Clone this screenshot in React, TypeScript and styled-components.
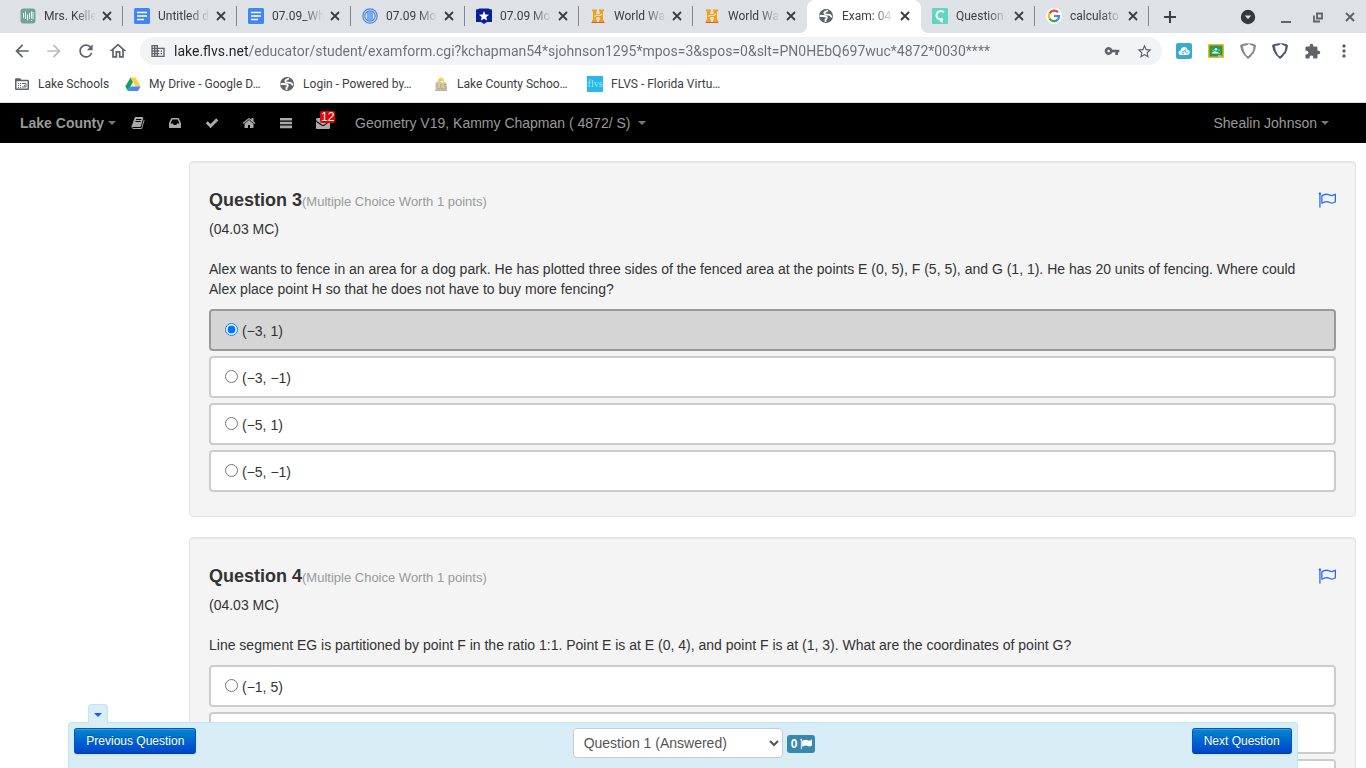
import React, { useState } from "react";
import styled, { createGlobalStyle, css } from "styled-components";
import {
  MdArrowBack,
  MdArrowForward,
  MdDomain,
  MdExtension,
  MdMoreVert,
  MdOutlineHome,
  MdRefresh,
  MdStarBorder,
  MdVpnKey,
} from "react-icons/md";

const GlobalStyle = createGlobalStyle`
  *, *::before, *::after { box-sizing: border-box; }
  html, body, #root { height: 100%; }
  body {
    margin: 0;
    background: #fff;
    color: #333;
    font: 14px/20px "Liberation Sans", Arial, sans-serif;
    overflow: hidden;
  }
  button { margin: 0; border: 0; padding: 0; background: none; font: inherit; color: inherit; cursor: pointer; }
  svg { display: block; flex: none; }
`;

/* ---------- Browser window ---------- */

const Window = styled.div`
  display: flex;
  flex-direction: column;
  height: 100%;
`;

const TabStrip = styled.div`
  display: flex;
  flex: none;
  height: 33px;
  padding-left: 9px;
  background: #dee1e6;
  font-family: Roboto, sans-serif;
  font-size: 12px;
  color: #3c4043;
`;

const TabList = styled.div`
  display: flex;
  flex: 0 1 1140px;
  min-width: 0;
`;

const Tab = styled.div<{ $active?: boolean; $line?: boolean }>`
  position: relative;
  display: flex;
  flex: 1 1 0;
  min-width: 0;
  align-items: center;
  gap: 8px;
  padding: 0 8px 1px 11px;

  ${(p) =>
    p.$line &&
    css`
      &::after {
        content: "";
        position: absolute;
        right: 0;
        top: 6px;
        width: 1px;
        height: 20px;
        background: #80868b;
      }
    `}

  ${(p) =>
    p.$active &&
    css`
      background: #fff;
      border-radius: 8px 8px 0 0;
      &::before,
      &::after {
        content: "";
        position: absolute;
        bottom: 0;
        width: 8px;
        height: 8px;
      }
      &::before {
        left: -8px;
        background: radial-gradient(circle at 0 0, transparent 8px, #fff 8px);
      }
      &::after {
        right: -8px;
        background: radial-gradient(circle at 100% 0, transparent 8px, #fff 8px);
      }
    `}
`;

const TabTitle = styled.span`
  flex: 1;
  min-width: 0;
  white-space: nowrap;
  line-height: 16px;
  mask-image: linear-gradient(90deg, #000 60%, transparent);
`;

const TabClose = styled.button`
  flex: none;
  margin-left: -5px;
`;

const NewTab = styled.button`
  display: grid;
  place-items: center;
  width: 42px;
`;

const WindowControls = styled.div`
  display: flex;
  align-items: center;
  margin-left: auto;
`;

const WindowButton = styled.button<{ $wide?: boolean }>`
  display: grid;
  place-items: center;
  width: ${(p) => (p.$wide ? 44 : 32)}px;
  height: 33px;
  color: #5f6368;
`;

const Toolbar = styled.div`
  display: flex;
  flex: none;
  align-items: center;
  height: 36px;
  padding: 0 6px;
  color: #5f6368;
`;

const ToolButton = styled.button<{ $dim?: boolean }>`
  display: grid;
  flex: none;
  place-items: center;
  width: 32px;
  height: 28px;
  color: ${(p) => (p.$dim ? "#babcbe" : "#5f6368")};
`;

const Omnibox = styled.form`
  display: flex;
  flex: 1;
  align-items: center;
  min-width: 0;
  height: 28px;
  margin: 0 6px;
  padding: 0 2px 0 10px;
  border-radius: 14px;
  background: #f1f3f4;
`;

const Address = styled.input`
  flex: 1;
  min-width: 0;
  height: 20px;
  margin-left: 8px;
  border: 0;
  padding: 0;
  outline: 0;
  font: 14px/20px Roboto, sans-serif;
  color: transparent;
  caret-color: #202124;
  background: linear-gradient(90deg, #202124 75px, #6b6f73 75px);
  background-clip: text;
`;

const Bookmarks = styled.nav`
  display: flex;
  flex: none;
  align-items: center;
  gap: 16px;
  height: 34px;
  padding: 0 14px 3px;
  border-bottom: 1px solid #dadce0;
`;

const Bookmark = styled.a<{ $clipped?: boolean }>`
  display: flex;
  align-items: center;
  gap: 8px;
  min-width: ${(p) => (p.$clipped ? 138 : 0)}px;
  font: 12px/16px Roboto, sans-serif;
  color: #3c4043;
  text-decoration: none;
  white-space: nowrap;
`;

/* ---------- Course navigation ---------- */

const Navbar = styled.header`
  display: flex;
  flex: none;
  align-items: center;
  height: 40px;
  padding: 0 37px 0 20px;
  background: #000;
  color: #999;
`;

const NavLink = styled.a<{ $bold?: boolean; $gap?: number }>`
  display: flex;
  align-items: center;
  gap: ${(p) => p.$gap ?? 4}px;
  font-size: 14px;
  font-weight: ${(p) => (p.$bold ? "bold" : "normal")};
  color: #999;
  text-decoration: none;
  white-space: nowrap;
`;

const NavIcons = styled.div`
  display: flex;
  margin: 0 14px 0 3px;
`;

const NavIcon = styled.a`
  position: relative;
  display: grid;
  place-items: center;
  width: 37px;
  height: 40px;
  color: #aaa;
`;

const Count = styled.span`
  position: absolute;
  left: 16px;
  top: 8px;
  padding: 0 1px;
  border-radius: 2px;
  background: #e60000;
  color: #fff;
  font-size: 12px;
  line-height: 12px;
`;

const Caret = styled.i<{ $color?: string }>`
  border: 4px solid transparent;
  border-bottom-width: 0;
  border-top-color: ${(p) => p.$color ?? "#777"};
`;

const Push = styled.div`
  margin-left: auto;
`;

/* ---------- Exam ---------- */

const Exam = styled.main`
  flex: 1;
  min-height: 0;
  overflow: hidden;
  padding: 18px 10px 0 189px;
`;

const Card = styled.section`
  margin-bottom: 20px;
  padding: 19px;
  border: 1px solid #e3e3e3;
  border-radius: 4px;
  background: #f4f4f4;
  box-shadow: inset 0 1px 1px rgba(0, 0, 0, 0.05);
`;

const CardHead = styled.div`
  display: flex;
  align-items: center;
  justify-content: space-between;
  height: 38px;
`;

const Title = styled.h2`
  margin: 2px 0 0;
  font-size: 18px;
  line-height: 20px;
`;

const Worth = styled.small`
  font-size: 13px;
  font-weight: normal;
  color: #999;
`;

const Standard = styled.p`
  margin: 0 0 20px;
`;

const Prompt = styled.p`
  margin: 0 0 10px;
  padding-right: 14px;
`;

const Options = styled.fieldset`
  margin: 0;
  border: 0;
  padding: 0;
`;

const Option = styled.label<{ $picked: boolean }>`
  display: flex;
  align-items: flex-start;
  gap: 4px;
  height: 42px;
  margin-bottom: 5px;
  padding: 10px 14px 8px;
  border: 2px solid ${(p) => (p.$picked ? "#999" : "#ccc")};
  border-radius: 4px;
  background: ${(p) => (p.$picked ? "#d5d5d5" : "#fff")};
`;

const Radio = styled.input`
  width: 13px;
  height: 13px;
  margin: 2px 0 0;
`;

const FlagButton = styled.button`
  color: #2a6df4;
`;

/* ---------- Question pager ---------- */

const Pager = styled.footer`
  position: fixed;
  right: 5%;
  bottom: 0;
  left: 5%;
  display: flex;
  align-items: flex-start;
  justify-content: space-between;
  height: 46px;
  padding: 5px;
  border: 1px solid #bce8f1;
  border-bottom: 0;
  border-radius: 4px 4px 0 0;
  background: #d9edf7;
`;

const Handle = styled.button`
  position: absolute;
  left: 19px;
  top: -19px;
  display: grid;
  place-items: center;
  width: 20px;
  height: 20px;
  border: 1px solid #bce8f1;
  border-bottom: 0;
  border-radius: 4px 4px 0 0;
  background: #d9edf7;
`;

const StepButton = styled.button`
  height: 26px;
  padding: 0 11px;
  border: 1px solid;
  border-color: #0055cc #0055cc #003fb0;
  border-radius: 3px;
  background: linear-gradient(#0088cc, #0044cc);
  box-shadow: inset 0 1px 0 rgba(255, 255, 255, 0.2), 0 1px 2px rgba(0, 0, 0, 0.05);
  color: #fff;
  font-size: 12px;
  line-height: 20px;
  text-shadow: 0 -1px 0 rgba(0, 0, 0, 0.25);
`;

const Picker = styled.div`
  display: flex;
  gap: 4px;
`;

const QuestionSelect = styled.select`
  width: 210px;
  height: 30px;
  padding: 4px 6px;
  border: 1px solid #ccc;
  border-radius: 4px;
  background: #fff;
  color: #555;
  font: 14px/20px "Liberation Sans", Arial, sans-serif;
`;

const FlagCount = styled.span`
  display: flex;
  align-items: center;
  gap: 3px;
  height: 18px;
  margin-top: 7px;
  padding: 0 3px 0 4px;
  border-radius: 3px;
  background: #3a87ad;
  color: #fff;
  font-size: 12px;
  font-weight: bold;
`;

/* ---------- Drawings ---------- */

const glyphs = {
  book: "M1703 478q40 57 18 129l-275 906q-19 64-76.5 107.5t-122.5 43.5h-923q-77 0-148.5-53.5t-99.5-131.5q-24-67-2-127 0-4 3-27t4-37q1-8-3-21.5t-3-19.5q2-11 8-21t16.5-23.5 16.5-23.5q23-38 45-91.5t30-91.5q3-10 .5-30t-.5-28q3-11 17-28t17-23q21-36 42-92t25-90q1-9-2.5-32t.5-28q4-13 22-30.5t22-22.5q19-26 42.5-84.5t27.5-96.5q1-8-3-25.5t-2-26.5q2-8 9-18t18-23 17-21q8-12 16.5-30.5t15-35 16-36 19.5-32 26.5-23.5 36-11.5 47.5 5.5l-1 3q38-9 51-9h761q74 0 114 56t18 130l-274 906q-36 119-71.5 153.5t-128.5 34.5h-869q-27 0-38 15-11 16-1 43 24 70 144 70h923q29 0 56-15.5t35-41.5l300-987q7-22 5-57 38 15 59 43zm-1064 2q-4 13 2 22.5t20 9.5h608q13 0 25.5-9.5t16.5-22.5l21-64q4-13-2-22.5t-20-9.5h-608q-13 0-25.5 9.5t-16.5 22.5zm-83 256q-4 13 2 22.5t20 9.5h608q13 0 25.5-9.5t16.5-22.5l21-64q4-13-2-22.5t-20-9.5h-608q-13 0-25.5 9.5t-16.5 22.5z",
  inbox: "M1151 960h316q-1-3-2.5-8t-2.5-8l-212-496h-708l-212 496q-1 2-2.5 8t-2.5 8h316l95 192h320zm513 30v482q0 26-19 45t-45 19h-1408q-26 0-45-19t-19-45v-482q0-62 25-123l238-552q10-25 36.5-42t52.5-17h832q26 0 52.5 17t36.5 42l238 552q25 61 25 123z",
  check: "M1671 566q0 40-28 68l-724 724-136 136q-28 28-68 28t-68-28l-136-136-362-362q-28-28-28-68t28-68l136-136q28-28 68-28t68 28l294 295 656-657q28-28 68-28t68 28l136 136q28 28 28 68z",
  home: "M1472 992v480q0 26-19 45t-45 19h-384v-384h-256v384h-384q-26 0-45-19t-19-45v-480q0-1 .5-3t.5-3l575-474 575 474q1 2 1 6zm223-69l-62 74q-8 9-21 11h-3q-13 0-21-7l-692-577-692 577q-12 8-24 7-13-2-21-11l-62-74q-8-10-7-23.5t11-21.5l719-599q32-26 76-26t76 26l244 204v-195q0-14 9-23t23-9h192q14 0 23 9t9 23v408l219 182q10 8 11 21.5t-7 23.5z",
  bars: "M128 256h1536v330h-1536zM128 740h1536v330h-1536zM128 1224h1536v330h-1536z",
  mail: "M1792 710v794q0 66-47 113t-113 47h-1472q-66 0-113-47t-47-113v-794q44 49 101 87 362 246 497 345 57 42 92.5 65.5t94.5 48 110 24.5h2q51 0 110-24.5t94.5-48 92.5-65.5q170-123 498-345 57-39 100-87zm0-294q0 79-49 151t-122 123q-376 261-468 325-10 7-42.5 31t-54 38.5-52 32.5-57.5 27-50 9h-2q-23 0-50-9t-57.5-27-52-32.5-54-38.5-42.5-31q-91-64-262-182.5t-205-142.5q-62-42-117-115.5t-55-136.5q0-78 41.5-130t118.5-52h1472q65 0 112.5 47t47.5 113z",
  flag: "M320 256q0 72-64 110v1266q0 13-9.5 22.5t-22.5 9.5h-64q-13 0-22.5-9.5t-9.5-22.5v-1266q-64-38-64-110 0-53 37.5-90.5t90.5-37.5 90.5 37.5 37.5 90.5zm1472 64v763q0 25-12.5 38.5t-39.5 27.5q-215 116-369 116-61 0-123.5-22t-108.5-48-115.5-48-142.5-22q-192 0-464 146-17 9-33 9-26 0-45-19t-19-45v-742q0-32 31-55 21-14 79-43 236-120 421-120 107 0 200 29t219 88q38 19 88 19 54 0 117.5-21t110-47 88-47 54.5-21q26 0 45 19t19 45z",
  flagOutline:
    "M1664 1048v-616q-169 91-306 91-82 0-145-32-100-49-184-76.5t-178-27.5q-173 0-403 127v599q245-113 433-113 55 0 103.5 7.5t98 26 77 31 82.5 39.5l28 14q44 22 101 22 120 0 293-92zM320 256q0 35-17.5 64t-46.5 46v1266q0 14-9 23t-23 9h-64q-14 0-23-9t-9-23V366q-29-17-46.5-46T64 256q0-53 37.5-90.5T192 128t90.5 37.5T320 256zM1792 320v763q0 39-35 57-10 5-17 9-218 116-369 116-88 0-158-35l-28-14q-64-33-99-48t-91-29-114-14q-102 0-235.5 44T417 1271q-15 9-33 9-16 0-32-8-32-19-32-56V474q0-35 31-55 35-21 78.5-42.5t114-52T696 275t155-19q112 0 209 31t209 86q38 19 89 19 122 0 310-112 22-12 31-17 31-16 62 2 31 20 31 55z",
};

type GlyphName = keyof typeof glyphs;

const Glyph = ({ name, size = 14 }: { name: GlyphName; size?: number }) => (
  <svg width={size} height={size} viewBox="0 0 1792 1792" fill="currentColor" fillRule="evenodd" aria-hidden="true">
    <path d={glyphs[name]} />
  </svg>
);

const Icon16 = ({ children }: { children: React.ReactNode }) => (
  <svg width={16} height={16} viewBox="0 0 16 16" fill="none" aria-hidden="true">
    {children}
  </svg>
);

const CrossIcon = () => (
  <Icon16>
    <path d="M4 4l8 8M12 4l-8 8" stroke="currentColor" strokeWidth="1.9" />
  </Icon16>
);

const PlusIcon = () => (
  <Icon16>
    <path d="M8 2v12M2 8h12" stroke="currentColor" strokeWidth="2" />
  </Icon16>
);

const PulseIcon = () => (
  <Icon16>
    <rect x="0.5" y="0.5" width="15" height="15" rx="3" fill="#6fa592" />
    <path d="M3.5 5v5M5.5 3.5V11M7.5 6.5v6M9.5 5v6M11.5 3.5v7M11.5 12v1M13 4v7" stroke="#fff" strokeWidth="0.9" />
  </Icon16>
);

const DocIcon = () => (
  <Icon16>
    <rect width="16" height="16" rx="1.5" fill="#4285f4" />
    <path d="M3 4.5h10M3 8h10M3 11.5h7" stroke="#fff" strokeWidth="1.6" />
  </Icon16>
);

const RingsIcon = () => (
  <Icon16>
    <circle cx="8" cy="8" r="7.2" stroke="#3f86f0" strokeWidth="1.2" />
    <circle cx="8" cy="8" r="5.2" stroke="#3f86f0" strokeWidth="1.2" />
    <path d="M6 4v8M8 3.5v9M10 4v8" stroke="#3f86f0" strokeWidth="1.2" />
  </Icon16>
);

const ShieldStarIcon = () => (
  <Icon16>
    <path d="M0 1.5Q2 1.5 3.5 0.5H12.5Q14 1.5 16 1.5V14H11L8 16 5 14H0z" fill="#0b1f96" />
    <path d="M8 3l1.4 3.4 3.6.3-2.7 2.4.8 3.5L8 10.8l-3.1 1.8.8-3.5L3 6.7l3.6-.3z" fill="#fff" />
  </Icon16>
);

const HistoryIcon = () => (
  <Icon16>
    <path d="M2 1.5h5v1.8H6.3v3h3.4v-3H9V1.5h5v1.8h-1V12h1v2H9v-2h.7V9H6.3v3H7v2H2v-2h1V3.3H2z" fill="#f0a01c" />
    <path d="M4 8.5L6 7.5h4l2-1.5" stroke="#ffe07a" strokeWidth="1.2" />
    <path d="M1.5 14.5h13" stroke="#cf5f4a" strokeWidth="1" />
  </Icon16>
);

const GlobeIcon = () => (
  <Icon16>
    <circle cx="8" cy="8" r="7" fill="#5f6368" />
    <path d="M10 2.5L7 4Q5.500 5.500 7.500 6.300L11.500 6.800Q13 7 13 8.500L14 9" stroke="#fff" strokeWidth="1.8" />
    <path d="M1.5 8H5Q8.500 8 8.800 9.500 8.800 11 7.500 11.500V14" stroke="#fff" strokeWidth="1.8" />
  </Icon16>
);

const CaIcon = () => (
  <Icon16>
    <rect width="16" height="16" rx="1" fill="#5fd6bd" />
    <path d="M12 4.200Q8.500 1.800 5.500 4.500 3.200 8 6 10.500q2 1.500 5 .3" stroke="#fff" strokeWidth="2" />
    <path d="M8.300 12.200q.7 1.500 2.700 1.300" stroke="#fff" strokeWidth="1.8" />
  </Icon16>
);

const GoogleIcon = () => (
  <Icon16>
    <circle cx="8" cy="8" r="8" fill="#fff" />
    <path d="M12 4.200A5.200 5.200 0 0 0 3.500 5.500" stroke="#ea4335" strokeWidth="2.2" />
    <path d="M3.500 5.500a5.200 5.200 0 0 0 0 5" stroke="#fbbc05" strokeWidth="2.2" />
    <path d="M3.500 10.500a5.200 5.200 0 0 0 8 1.400" stroke="#34a853" strokeWidth="2.2" />
    <path d="M8 8h5.100q0 2.400-1.600 3.900" stroke="#4285f4" strokeWidth="2.2" />
  </Icon16>
);

const FolderIcon = () => (
  <Icon16>
    <path
      fillRule="evenodd"
      d="M1 3.500Q1 2.200 2.300 2.200H6L7.500 3.700h6.200Q15 3.700 15 5v7.700q0 1.300-1.300 1.300H2.300Q1 14 1 12.700zM2.500 5.200v7.300h11V5.200z"
      fill="#5f6368"
    />
    <path d="M4 7.500h1M6 7.500h1M4 9.500h1M6 9.500h1M4 11.500h1M6 11.500h1M8 7.500h4v3.500H8M10 9.500h1" stroke="#5f6368" strokeWidth="1" />
  </Icon16>
);

const DriveIcon = () => (
  <Icon16>
    <path d="M5.500 1.500L0.300 10.500 3 15 8 6z" fill="#11a05e" />
    <path d="M5.500 1.500h5l5.200 9h-5.200z" fill="#ffcf48" />
    <path d="M5.500 10.500h10.200L13 15H3z" fill="#4688f4" />
  </Icon16>
);

const CountyIcon = () => (
  <Icon16>
    <path d="M5 5Q5 2 8 1.500 11 2 11 5L13 5.500H4z" fill="#f6cf4a" />
    <path d="M2.500 14V6.500L6 5l3 1.500 3-.5 2 2V14z" fill="#c5c9d0" />
    <path d="M4 7v5.500h2.500M9.500 8H7.700v4.500h2M13 8.500h-2v1.800h1.800v2.200H10.500" stroke="#d8a92e" strokeWidth="1" />
    <path d="M2 14.300h12" stroke="#9aa0aa" strokeWidth="1" />
  </Icon16>
);

const FlvsBox = styled.span`
  width: 16px;
  height: 16px;
  background: #29b6ea;
  color: #a5e6fb;
  font: 10px/16px "Liberation Serif", serif;
  text-align: center;
`;

const CloudIcon = () => (
  <Icon16>
    <rect width="16" height="16" rx="2" fill="#35acd3" />
    <path d="M5 12q-2.500 0-2.500-2.200T4.700 7.500Q5 4 8.300 4q2.700 0 3.200 2.700 2.300.3 2.300 2.600T11.500 12z" fill="#fff" />
    <path d="M8 10.500q-2 .5-2-1t2-1.500 1.700 1.500q.8 1.500 2-.5M8.500 8q1-2.200 2-1" stroke="#35acd3" strokeWidth="0.9" />
  </Icon16>
);

const ClassroomIcon = () => (
  <Icon16>
    <rect y="1" width="16" height="14" rx="1" fill="#f6b50b" />
    <rect x="1.500" y="2.500" width="13" height="11" fill="#1a9e5b" />
    <circle cx="8" cy="6.300" r="1.300" fill="#fff" />
    <circle cx="5" cy="7.300" r="0.800" fill="#a8dcc0" />
    <circle cx="11" cy="7.300" r="0.800" fill="#a8dcc0" />
    <path d="M3.500 10.500Q5.500 7.500 8 8.500t4.500 2z" fill="#fff" />
    <path d="M10 13h3.500" stroke="#e8e8e8" strokeWidth="1" />
  </Icon16>
);

const ShieldIcon = ({ color }: { color: string }) => (
  <Icon16>
    <g fill={color} stroke={color} strokeWidth="0.9" strokeLinejoin="round">
      <path d="M.5 2.200Q4 .5 8.500.8L7 1.900Q4.500 1.900 2.500 2.800 2.500 7 5.300 11.500L4.800 12.500Q1 8 .5 2.200z" />
      <path d="M9.500.8Q13 .8 15.500 2.200 15.400 7 12.800 11L12.500 9.500Q14 6.500 14 3 11.500 2 9.500.8z" />
      <path d="M5.300 11.800Q7 13.500 8 13.800q2-1.300 4-4.300l.3 1.500Q10.500 14.200 8 15.500 6 14.500 5.300 11.800z" />
    </g>
  </Icon16>
);

const SearchTabsIcon = () => (
  <Icon16>
    <circle cx="8" cy="8" r="7.200" fill="#35383c" />
    <path d="M4.800 6.500h6.400L8 10.200z" fill="#dee1e6" />
  </Icon16>
);

/* ---------- Content ---------- */

const tabs = [
  { title: "Mrs. Kelle", icon: <PulseIcon /> },
  { title: "Untitled d", icon: <DocIcon /> },
  { title: "07.09_Wh", icon: <DocIcon /> },
  { title: "07.09 Mo", icon: <RingsIcon /> },
  { title: "07.09 Mo", icon: <ShieldStarIcon /> },
  { title: "World Wa", icon: <HistoryIcon /> },
  { title: "World Wa", icon: <HistoryIcon /> },
  { title: "Exam: 04", icon: <GlobeIcon /> },
  { title: "Question", icon: <CaIcon /> },
  { title: "calculato", icon: <GoogleIcon /> },
];
const activeTab = 7;

const bookmarks = [
  { label: "Lake Schools", icon: <FolderIcon /> },
  { label: "My Drive - Google D…", icon: <DriveIcon /> },
  { label: "Login - Powered by…", icon: <GlobeIcon /> },
  { label: "Lake County Schoo…", icon: <CountyIcon /> },
  { label: "FLVS - Florida Virtu…", icon: <FlvsBox>flvs</FlvsBox> },
];

const navIcons: { name: GlyphName; label: string; count?: number }[] = [
  { name: "book", label: "Lessons" },
  { name: "inbox", label: "Inbox" },
  { name: "check", label: "Assessments" },
  { name: "home", label: "Home" },
  { name: "bars", label: "Gradebook" },
  { name: "mail", label: "Messages", count: 12 },
];

const questions = [
  {
    number: 3,
    prompt:
      "Alex wants to fence in an area for a dog park. He has plotted three sides of the fenced area at the points E (0, 5), F (5, 5), and G (1, 1). He has 20 units of fencing. Where could Alex place point H so that he does not have to buy more fencing?",
    options: ["(−3, 1)", "(−3, −1)", "(−5, 1)", "(−5, −1)"],
    answer: 0,
  },
  {
    number: 4,
    prompt:
      "Line segment EG is partitioned by point F in the ratio 1:1. Point E is at E (0, 4), and point F is at (1, 3). What are the coordinates of point G?",
    options: ["(−1, 5)", "", ""],
    answer: -1,
  },
];

function Question({ number, prompt, options, answer }: (typeof questions)[number]) {
  const [picked, setPicked] = useState(answer);
  return (
    <Card>
      <CardHead>
        <Title>
          Question {number}
          <Worth>(Multiple Choice Worth 1 points)</Worth>
        </Title>
        <FlagButton aria-label={`Flag question ${number}`}>
          <Glyph name="flagOutline" size={18} />
        </FlagButton>
      </CardHead>
      <Standard>(04.03 MC)</Standard>
      <Prompt>{prompt}</Prompt>
      <Options>
        {options.map((text, i) => (
          <Option key={i} $picked={picked === i}>
            <Radio type="radio" name={`q${number}`} checked={picked === i} onChange={() => setPicked(i)} />
            {text}
          </Option>
        ))}
      </Options>
    </Card>
  );
}

export default function App() {
  return (
    <Window>
      <GlobalStyle />
      <TabStrip>
        <TabList>
          {tabs.map((tab, i) => (
            <Tab key={i} $active={i === activeTab} $line={i !== activeTab && i !== activeTab - 1}>
              {tab.icon}
              <TabTitle>{tab.title}</TabTitle>
              <TabClose aria-label="Close tab">
                <CrossIcon />
              </TabClose>
            </Tab>
          ))}
        </TabList>
        <NewTab aria-label="New tab">
          <PlusIcon />
        </NewTab>
        <WindowControls>
          <WindowButton $wide aria-label="Search tabs">
            <SearchTabsIcon />
          </WindowButton>
          <WindowButton aria-label="Minimize">
            <Icon16>
              <path d="M3 13h10" stroke="currentColor" strokeWidth="2" />
            </Icon16>
          </WindowButton>
          <WindowButton aria-label="Restore">
            <Icon16>
              <path d="M7 4.500h5v5H7zM4 6.500V12.500H10" stroke="currentColor" strokeWidth="1.800" />
            </Icon16>
          </WindowButton>
          <WindowButton aria-label="Close window">
            <CrossIcon />
          </WindowButton>
        </WindowControls>
      </TabStrip>

      <Toolbar>
        <ToolButton aria-label="Back">
          <MdArrowBack size={20} />
        </ToolButton>
        <ToolButton $dim aria-label="Forward">
          <MdArrowForward size={20} />
        </ToolButton>
        <ToolButton aria-label="Reload">
          <MdRefresh size={20} />
        </ToolButton>
        <ToolButton aria-label="Home">
          <MdOutlineHome size={20} />
        </ToolButton>
        <Omnibox>
          <MdDomain size={16} />
          <Address
            aria-label="Address"
            defaultValue="lake.flvs.net/educator/student/examform.cgi?kchapman54*sjohnson1295*mpos=3&spos=0&slt=PN0HEbQ697wuc*4872*0030****"
          />
          <ToolButton type="button" aria-label="Passwords">
            <MdVpnKey size={16} />
          </ToolButton>
          <ToolButton type="button" aria-label="Bookmark">
            <MdStarBorder size={17} />
          </ToolButton>
        </Omnibox>
        <ToolButton aria-label="Cloud extension">
          <CloudIcon />
        </ToolButton>
        <ToolButton aria-label="Classroom">
          <ClassroomIcon />
        </ToolButton>
        <ToolButton aria-label="Shield">
          <ShieldIcon color="#85888c" />
        </ToolButton>
        <ToolButton aria-label="Shield filter">
          <ShieldIcon color="#4a5670" />
        </ToolButton>
        <ToolButton aria-label="Extensions">
          <MdExtension size={17} />
        </ToolButton>
        <ToolButton aria-label="Menu">
          <MdMoreVert size={20} />
        </ToolButton>
      </Toolbar>

      <Bookmarks aria-label="Bookmarks">
        {bookmarks.map((b) => (
          <Bookmark key={b.label} href="#" $clipped={b.label.endsWith("…")}>
            {b.icon}
            {b.label}
          </Bookmark>
        ))}
      </Bookmarks>

      <Navbar>
        <NavLink href="#" $bold>
          Lake County <Caret />
        </NavLink>
        <NavIcons>
          {navIcons.map((n) => (
            <NavIcon key={n.name} href="#" aria-label={n.label}>
              <Glyph name={n.name} />
              {n.count && <Count>{n.count}</Count>}
            </NavIcon>
          ))}
        </NavIcons>
        <NavLink href="#" $gap={8}>
          Geometry V19, Kammy Chapman ( 4872/ S) <Caret />
        </NavLink>
        <Push>
          <NavLink href="#">
            Shealin Johnson <Caret />
          </NavLink>
        </Push>
      </Navbar>

      <Exam>
        {questions.map((q) => (
          <Question key={q.number} {...q} />
        ))}
      </Exam>

      <Pager>
        <Handle aria-label="Collapse">
          <Caret $color="#1a5cf5" />
        </Handle>
        <StepButton>Previous Question</StepButton>
        <Picker>
          <QuestionSelect aria-label="Question">
            <option>Question 1 (Answered)</option>
          </QuestionSelect>
          <FlagCount>
            0 <Glyph name="flag" size={12} />
          </FlagCount>
        </Picker>
        <StepButton>Next Question</StepButton>
      </Pager>
    </Window>
  );
}
